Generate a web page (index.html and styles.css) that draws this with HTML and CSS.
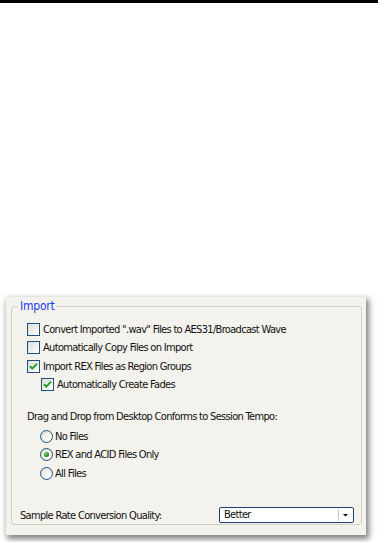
FILE: index.html
```html
<!DOCTYPE html>
<html>
<head>
<meta charset="utf-8">
<link rel="stylesheet" href="styles.css">
</head>
<body>
<div class="topbar"></div>
<div class="panel">
  <fieldset class="group">
    <legend class="legend">Import</legend>
    <div class="opts">
      <div class="row"><span class="cb"></span><span class="lbl">Convert Imported ".wav" Files to AES31/Broadcast Wave</span></div>
      <div class="row"><span class="cb"></span><span class="lbl">Automatically Copy Files on Import</span></div>
      <div class="row"><span class="cb checked"><svg viewBox="0 0 13 13" width="13" height="13"><path d="M3 6.2 L5.3 8.6 L10 3.6" fill="none" stroke="#21a121" stroke-width="2"/></svg></span><span class="lbl">Import REX Files as Region Groups</span></div>
      <div class="row indent"><span class="cb checked"><svg viewBox="0 0 13 13" width="13" height="13"><path d="M3 6.2 L5.3 8.6 L10 3.6" fill="none" stroke="#21a121" stroke-width="2"/></svg></span><span class="lbl">Automatically Create Fades</span></div>
    </div>
    <div class="drag">Drag and Drop from Desktop Conforms to Session Tempo:</div>
    <div class="radios">
      <div class="row"><span class="rb"></span><span class="lbl2">No Files</span></div>
      <div class="row"><span class="rb on"><span class="dot"></span></span><span class="lbl2">REX and ACID Files Only</span></div>
      <div class="row"><span class="rb"></span><span class="lbl2">All Files</span></div>
    </div>
    <div class="bottom">
      <span class="srlabel">Sample Rate Conversion Quality:</span>
      <div class="select"><span class="seltext">Better</span><span class="selbtn"><svg viewBox="0 0 7 4" width="7" height="4"><path d="M1 1 L6 1 L3.5 3.5 Z" fill="#000"/></svg></span></div>
    </div>
  </fieldset>
</div>
</body>
</html>
```
FILE: styles.css
```css
html, body {
  margin: 0;
  padding: 0;
  background: #ffffff;
}
body {
  width: 378px;
  height: 542px;
  overflow: hidden;
  font-family: "DejaVu Sans", Verdana, sans-serif;
  font-stretch: condensed;
  font-size: 11px;
  letter-spacing: -0.68px;
  color: #111;
}
.topbar {
  height: 3px;
  background: #000;
}
.panel {
  margin: 294px 0 0 6px;
  width: 360px;
  height: 238px;
  box-sizing: border-box;
  padding: 3px 4px 0 5px;
  background: #f3f2ec;
  box-shadow: 2px 3px 6px 1px rgba(0, 0, 0, 0.5);
}
.group {
  margin: 0;
  padding: 0 7px 1px 8px;
  border: 1px solid #d0d0bf;
  border-radius: 3px;
  min-width: 0;
}
.legend {
  margin-left: -2px;
  padding: 0 2px;
  line-height: 13px;
  height: 13px;
  color: #1a3df0;
  font-size: 12px;
  letter-spacing: -0.2px;
}
.opts {
  padding-top: 7px;
}
.row {
  display: flex;
  align-items: center;
  height: 18.5px;
}
.opts .row {
  margin-left: 7px;
}
.opts .row.indent {
  margin-left: 21px;
}
.cb {
  width: 13px;
  height: 13px;
  box-sizing: border-box;
  border: 1px solid #1c5180;
  background: linear-gradient(135deg, #dcdcd5 0%, #f2f2ee 60%, #ffffff 100%);
  display: inline-flex;
  align-items: center;
  justify-content: center;
  flex: none;
}
.cb svg {
  display: block;
  margin: -1px;
}
.lbl {
  margin-left: 3px;
  white-space: nowrap;
}
.drag {
  margin: 16px 0 0 7px;
  line-height: 14px;
  height: 14px;
  white-space: nowrap;
}
.radios {
  margin-top: 2.75px;
}
.radios .row {
  margin-left: 20px;
}
.rb {
  width: 13px;
  height: 13px;
  box-sizing: border-box;
  border: 1px solid #1c5180;
  border-radius: 50%;
  background: radial-gradient(circle at 70% 70%, #ffffff 0%, #f0f0ea 50%, #d6d6ce 100%);
  display: inline-flex;
  align-items: center;
  justify-content: center;
  flex: none;
}
.dot {
  width: 5px;
  height: 5px;
  border-radius: 50%;
  background: radial-gradient(circle at 35% 35%, #6cd66c 0%, #2a8a2a 60%, #1a5a1a 100%);
}
.lbl2 {
  margin-left: 2px;
  white-space: nowrap;
}
.bottom {
  margin-top: 24.75px;
  display: flex;
  align-items: center;
  height: 16px;
}
.srlabel {
  white-space: nowrap;
}
.select {
  margin-left: auto;
  width: 135px;
  height: 16px;
  box-sizing: border-box;
  border: 1px solid #1c3f7a;
  border-radius: 2px;
  background: #ffffff;
  display: flex;
  align-items: center;
}
.seltext {
  flex: 1;
  padding-left: 4px;
  line-height: 14px;
}
.selbtn {
  width: 13px;
  height: 12px;
  border-left: 1px solid #c8c8c0;
  display: flex;
  align-items: center;
  justify-content: center;
  margin-right: 1px;
}
.selbtn svg {
  display: block;
}
```
